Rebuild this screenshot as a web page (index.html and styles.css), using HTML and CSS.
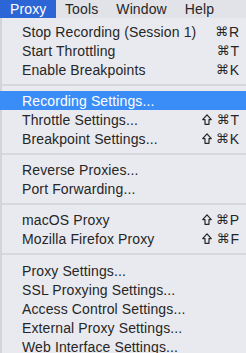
FILE: index.html
```html
<!DOCTYPE html>
<html lang="en">
<head>
    <meta charset="UTF-8">
    <title>Proxy menu</title>
    <link rel="stylesheet" href="styles.css">
</head>
<body>
    <div class="menubar">
        <span class="menubar-item active">Proxy</span>
        <span class="menubar-item">Tools</span>
        <span class="menubar-item">Window</span>
        <span class="menubar-item">Help</span>
    </div>

    <div class="menu">
        <div class="menu-item"><span>Stop Recording (Session 1)</span><span class="key"><span class="cmd">⌘</span>R</span></div>
        <div class="menu-item"><span>Start Throttling</span><span class="key"><span class="cmd">⌘</span>T</span></div>
        <div class="menu-item"><span>Enable Breakpoints</span><span class="key"><span class="cmd">⌘</span>K</span></div>
        <div class="separator"></div>
        <div class="menu-item selected"><span>Recording Settings...</span></div>
        <div class="menu-item"><span>Throttle Settings...</span><span class="key"><svg class="shift" viewBox="0 0 10 11"><path d="M5 0.8 L9.3 5.6 H7 V10.3 H3 V5.6 H0.7 Z"/></svg><span class="cmd">⌘</span>T</span></div>
        <div class="menu-item"><span>Breakpoint Settings...</span><span class="key"><svg class="shift" viewBox="0 0 10 11"><path d="M5 0.8 L9.3 5.6 H7 V10.3 H3 V5.6 H0.7 Z"/></svg><span class="cmd">⌘</span>K</span></div>
        <div class="separator"></div>
        <div class="menu-item"><span>Reverse Proxies...</span></div>
        <div class="menu-item"><span>Port Forwarding...</span></div>
        <div class="separator"></div>
        <div class="menu-item"><span>macOS Proxy</span><span class="key"><svg class="shift" viewBox="0 0 10 11"><path d="M5 0.8 L9.3 5.6 H7 V10.3 H3 V5.6 H0.7 Z"/></svg><span class="cmd">⌘</span>P</span></div>
        <div class="menu-item"><span>Mozilla Firefox Proxy</span><span class="key"><svg class="shift" viewBox="0 0 10 11"><path d="M5 0.8 L9.3 5.6 H7 V10.3 H3 V5.6 H0.7 Z"/></svg><span class="cmd">⌘</span>F</span></div>
        <div class="separator last"></div>
        <div class="menu-item"><span>Proxy Settings...</span></div>
        <div class="menu-item"><span>SSL Proxying Settings...</span></div>
        <div class="menu-item"><span>Access Control Settings...</span></div>
        <div class="menu-item"><span>External Proxy Settings...</span></div>
        <div class="menu-item"><span>Web Interface Settings...</span></div>
    </div>
</body>
</html>
```

FILE: styles.css
```css
* {
    margin: 0;
    padding: 0;
    box-sizing: border-box;
}

body {
    font-family: 'Liberation Sans', Arial, sans-serif;
    font-size: 14px;
    letter-spacing: 0.12px;
    color: #262626;
    background: #e9eaef;
    width: 246px;
    height: 353px;
    overflow: hidden;
}

.menubar {
    height: 18px;
    background: #e2e3e9;
    display: flex;
    align-items: center;
}

.menubar-item {
    height: 18px;
    line-height: 18px;
    padding: 0 9px;
}

.menubar-item.active {
    width: 56px;
    background: #2c66d6;
    color: white;
    padding: 0 0 0 10px;
}

.menu {
    padding-top: 4px;
    border-left: 2px solid #d3d4d9;
    min-height: 335px;
}

.menu-item {
    height: 19px;
    display: flex;
    align-items: center;
    justify-content: space-between;
    padding: 0 7px 0 20px;
}

.menu-item.selected {
    background: #3a8df7;
    color: white;
    margin-left: -2px;
    padding-left: 22px;
}

.key {
    display: flex;
    align-items: center;
    letter-spacing: 0;
}

.cmd {
    font-family: 'DejaVu Sans', sans-serif;
    font-size: 13px;
    margin-right: 1px;
}

.shift {
    width: 10px;
    height: 11px;
    margin-right: 4px;
    fill: none;
    stroke: #262626;
    stroke-width: 1.2;
    stroke-linejoin: round;
}

.separator {
    height: 2px;
    background: #d7d8dd;
    margin: 5px 0;
}

.separator.last {
    margin-bottom: 6px;
}
```
